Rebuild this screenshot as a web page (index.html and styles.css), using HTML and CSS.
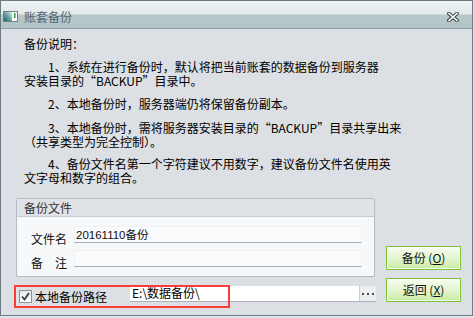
FILE: index.html
```html
<!DOCTYPE html>
<html lang="zh-CN">
<head>
<meta charset="utf-8">
<title>账套备份</title>
<link rel="stylesheet" href="styles.css">
</head>
<body>
<div class="window">
  <div class="titlebar">
    <svg class="app-icon" width="15" height="11" viewBox="0 0 15 11">
      <defs>
        <linearGradient id="ig" x1="0" y1="1" x2="1" y2="0">
          <stop offset="0" stop-color="#1f5f63"/>
          <stop offset="0.6" stop-color="#7fb2b3"/>
          <stop offset="1" stop-color="#dfeeee"/>
        </linearGradient>
      </defs>
      <rect x="0.5" y="0.5" width="14" height="10" fill="#fdfdfd" stroke="#737d84"/>
      <rect x="1" y="1" width="8" height="9" fill="url(#ig)"/>
      <rect x="11" y="2" width="1.5" height="5" fill="#2f9c3c"/>
    </svg>
    <span class="title">账套备份</span>
    <svg class="close" width="12" height="10" viewBox="0 0 12 10">
      <path d="M2 1.5 L10 8.5 M10 1.5 L2 8.5" stroke="#3a4246" stroke-width="3.6" stroke-linecap="square" fill="none"/>
      <path d="M2 1.5 L10 8.5 M10 1.5 L2 8.5" stroke="#ffffff" stroke-width="1.6" stroke-linecap="square" fill="none"/>
    </svg>
  </div>
  <div class="content">
    <div class="notes">
      <div class="heading">备份说明：</div>
      <p class="para p1">1、系统在进行备份时，默认将把当前账套的数据备份到服务器<br>安装目录的“BACKUP”目录中。</p>
      <p class="para p2">2、本地备份时，服务器端仍将保留备份副本。</p>
      <p class="para p3">3、本地备份时，需将服务器安装目录的“BACKUP”目录共享出来<br>（共享类型为完全控制）。</p>
      <p class="para p4">4、备份文件名第一个字符建议不用数字，建议备份文件名使用英<br>文字母和数字的组合。</p>
    </div>
    <div class="bottom">
      <div class="left-col">
        <div class="group">
          <div class="group-head">备份文件</div>
          <div class="group-body">
            <div class="field-row">
              <span class="field-label">文件名</span>
              <div class="field-input"><span class="value">20161110备份</span></div>
            </div>
            <div class="field-row">
              <span class="field-label">备　注</span>
              <div class="field-input"></div>
            </div>
          </div>
        </div>
        <div class="path-row">
          <span class="checkbox">
            <svg width="11" height="11" viewBox="0 0 11 11"><path d="M2 5.5 L4.5 8.5 L9 2" stroke="#3b3f42" stroke-width="1.8" fill="none"/></svg>
          </span>
          <span class="path-label">本地备份路径</span>
          <div class="path-input"><span class="path-value">E:\数据备份\</span></div>
          <div class="browse">
            <svg width="12" height="3" viewBox="0 0 12 3"><rect x="0" y="0" width="2" height="2" fill="#4a5055"/><rect x="5" y="0" width="2" height="2" fill="#4a5055"/><rect x="10" y="0" width="2" height="2" fill="#4a5055"/></svg>
          </div>
          <div class="highlight"></div>
        </div>
      </div>
      <div class="buttons">
        <button class="btn">备份 (<u>O</u>)</button>
        <button class="btn">返回 (<u>X</u>)</button>
      </div>
    </div>
  </div>
</div>
</body>
</html>
```
FILE: styles.css
```css
* { box-sizing: border-box; }
html, body { margin: 0; padding: 0; }
body {
  width: 474px;
  height: 318px;
  background: #e2e5e8;
  font-family: "Noto Sans CJK SC", "Noto Sans", sans-serif;
  font-size: 12px;
  color: #000;
  overflow: hidden;
}
.window {
  width: 473px;
  height: 316px;
  border: 1px solid #6c7b82;
  background: #dcdfe3;
  display: flex;
  flex-direction: column;
}
.titlebar {
  height: 28px;
  flex: none;
  display: flex;
  align-items: center;
  padding-left: 2px;
  padding-top: 4px;
  background: linear-gradient(#eef3f4 0, #e2e9eb 13px, #b7c8cb 14px, #b3c4c7 100%);
  border-bottom: 1px solid #8e9ea4;
}
.app-icon { flex: none; display: block; }
.title {
  margin-left: 6px;
  color: #566473;
  font-size: 12px;
  line-height: 14px;
}
.close {
  margin-left: auto;
  margin-right: 13px;
  display: block;
}
.content {
  flex: 1;
  padding: 8px 10px 0 15px;
}
.notes { padding-left: 8px; }
.heading { line-height: 14px; }
.para {
  margin: 0;
  line-height: 14px;
  white-space: nowrap;
  text-indent: 24px;
}
.p1 { margin-top: 9px; }
.p2 { margin-top: 9px; }
.p3 { margin-top: 10px; }
.p4 { margin-top: 8px; }
.bottom {
  margin-top: 13px;
  display: flex;
  align-items: flex-end;
  gap: 10px;
}
.left-col { width: 360px; }
.group {
  width: 359px;
  border: 1px solid #b4bbc2;
  border-radius: 2px;
  background: #f7f8fa;
}
.group-head {
  height: 18px;
  line-height: 17px;
  padding-left: 7px;
  color: #333;
  background: #dfe3e7;
  border-bottom: 1px solid #c6ccd2;
}
.group-body {
  padding: 9px 12px 9px 14px;
  display: flex;
  flex-direction: column;
  gap: 7px;
}
.field-row {
  display: flex;
  align-items: flex-end;
  height: 17px;
}
.field-label {
  width: 43px;
  flex: none;
  font-size: 12px;
  line-height: 15px;
  margin-bottom: -3px;
  color: #111;
}
.field-input {
  flex: 1;
  height: 17px;
  border: 1px solid #eff1f3;
  border-bottom: 1px solid #a3abb3;
  background: #fafbfc;
  display: flex;
  align-items: center;
  padding-left: 1px;
}
.value {
  font-family: "Liberation Sans", "Noto Sans CJK SC", sans-serif;
  font-size: 11.5px;
  line-height: 14px;
  color: #111;
}
.path-row {
  position: relative;
  margin-top: 9px;
  height: 16px;
  display: flex;
  align-items: flex-start;
}
.checkbox {
  flex: none;
  width: 13px;
  height: 13px;
  margin: 4px 0 0 3px;
  border: 1px solid #8a9197;
  background: linear-gradient(#e6e8ea, #ffffff);
  display: flex;
  align-items: center;
  justify-content: center;
}
.checkbox svg { display: block; }
.path-label {
  margin-left: 3px;
  margin-top: 4px;
  line-height: 14px;
  font-size: 12px;
}
.path-input {
  margin-left: 23px;
  width: 229px;
  height: 16px;
  background: #ffffff;
  border-bottom: 1px solid #a9b0b7;
  display: flex;
  align-items: center;
  padding-left: 2px;
}
.path-value {
  font-size: 12px;
  line-height: 13px;
  margin-top: -3px;
}
.browse {
  width: 17px;
  height: 16px;
  background: #eceef0;
  border-left: 1px solid #c9ced3;
  border-bottom: 1px solid #a9b0b7;
  display: flex;
  align-items: center;
  justify-content: center;
}
.browse svg { display: block; margin-top: 2px; }
.highlight {
  position: absolute;
  left: -2px;
  top: -1px;
  width: 216px;
  height: 23px;
  border: 2px solid #ff3a3a;
  pointer-events: none;
}
.buttons {
  display: flex;
  flex-direction: column;
  gap: 8px;
}
.btn {
  width: 75px;
  height: 24px;
  padding: 0;
  border: 1px solid #7cc142;
  box-shadow: inset 0 0 0 1px rgba(255,255,255,0.75);
  background: linear-gradient(#f8fdf2, #e2f4cc 55%, #c9eba0);
  font-family: "Noto Sans CJK SC", sans-serif;
  font-size: 12px;
  line-height: 14px;
  color: #111;
}
.btn u { text-underline-offset: 1px; }
```
